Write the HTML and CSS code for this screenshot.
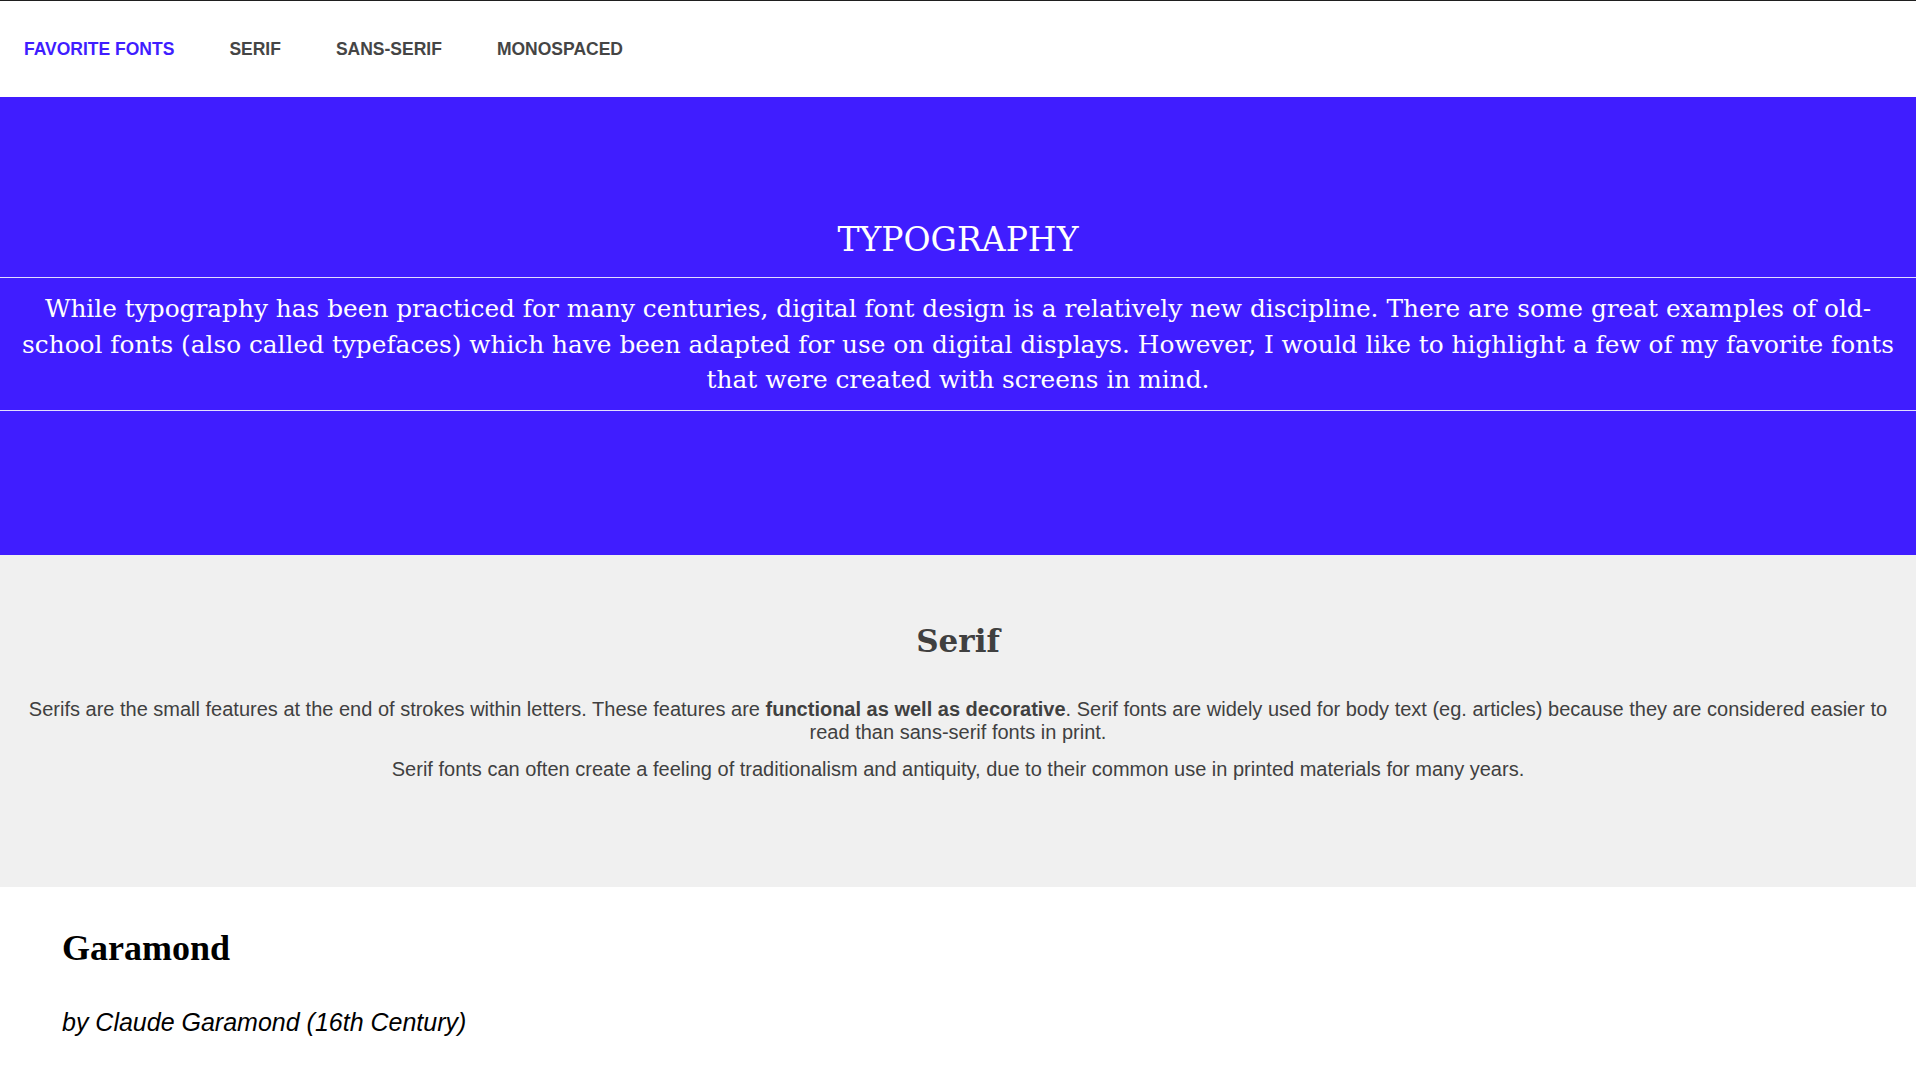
FILE: index.html
```
<!DOCTYPE html>
<html lang="en">
<head>
<meta charset="utf-8">
<title>Favorite Fonts</title>
<link rel="stylesheet" href="styles.css">
</head>
<body>
<nav class="topnav">
  <a class="navlink navlink-active" href="#">FAVORITE FONTS</a>
  <a class="navlink" href="#">SERIF</a>
  <a class="navlink" href="#">SANS-SERIF</a>
  <a class="navlink" href="#">MONOSPACED</a>
</nav>
<header class="hero">
  <h1 class="hero-title">TYPOGRAPHY</h1>
  <div class="hero-intro">
    <p>While typography has been practiced for many centuries, digital font design is a relatively new discipline. There are some great examples of old-school fonts (also called typefaces) which have been adapted for use on digital displays. However, I would like to highlight a few of my favorite fonts that were created with screens in mind.</p>
  </div>
</header>
<section class="family">
  <h2 class="family-title">Serif</h2>
  <p class="family-text">Serifs are the small features at the end of strokes within letters. These features are <strong>functional as well as decorative</strong>. Serif fonts are widely used for body text (eg. articles) because they are considered easier to<br>read than sans-serif fonts in print.</p>
  <p class="family-text">Serif fonts can often create a feeling of traditionalism and antiquity, due to their common use in printed materials for many years.</p>
</section>
<section class="font-card">
  <h3 class="font-name">Garamond</h3>
  <p class="font-byline">by Claude Garamond (16th Century)</p>
</section>
</body>
</html>
```
FILE: styles.css
```
* {
  box-sizing: border-box;
}

html, body {
  margin: 0;
  padding: 0;
}

body {
  font-family: "Liberation Sans", Arial, sans-serif;
  background: #ffffff;
  color: #000;
  border-top: 1px solid #1f1f1f;
}

.topnav {
  height: 96px;
  display: flex;
  align-items: center;
  gap: 55px;
  padding: 0 24px;
  background: #ffffff;
}

.navlink {
  font-family: "Liberation Sans", Arial, sans-serif;
  font-size: 17.5px;
  font-weight: 700;
  color: #454545;
  text-decoration: none;
  line-height: 20px;
}

.navlink-active {
  color: #401dff;
}

.hero {
  height: 458px;
  background: #401dff;
  color: #ffffff;
  padding-top: 123px;
  font-family: "DejaVu Serif", serif;
}

.hero-title {
  margin: 0 0 17px;
  font-family: "DejaVu Serif", serif;
  font-weight: 400;
  font-size: 33px;
  line-height: 40px;
  text-align: center;
}

.hero-intro {
  border-top: 1px solid rgba(255, 255, 255, 0.85);
  border-bottom: 1px solid rgba(255, 255, 255, 0.85);
  padding: 13px 20px 12px;
}

.hero-intro p {
  margin: 0;
  font-size: 24.8px;
  line-height: 35.5px;
  text-align: center;
}

.family {
  background: #f0f0f0;
  color: #404040;
  height: 332px;
  padding: 66px 20px 0;
  text-align: center;
}

.family-title {
  margin: 0 0 37px;
  font-family: "DejaVu Serif", serif;
  font-weight: 700;
  font-size: 31px;
  line-height: 40px;
}

.family-text {
  margin: 0 0 15px;
  font-size: 20px;
  line-height: 22.5px;
}

.font-card {
  padding: 41px 62px 0;
  background: #fff;
}

.font-name {
  margin: 0 0 40px;
  font-family: "Liberation Serif", "Times New Roman", serif;
  font-weight: 700;
  font-size: 36px;
  line-height: 40px;
}

.font-byline {
  margin: 0;
  font-style: italic;
  font-size: 25px;
  line-height: 28px;
}
```
